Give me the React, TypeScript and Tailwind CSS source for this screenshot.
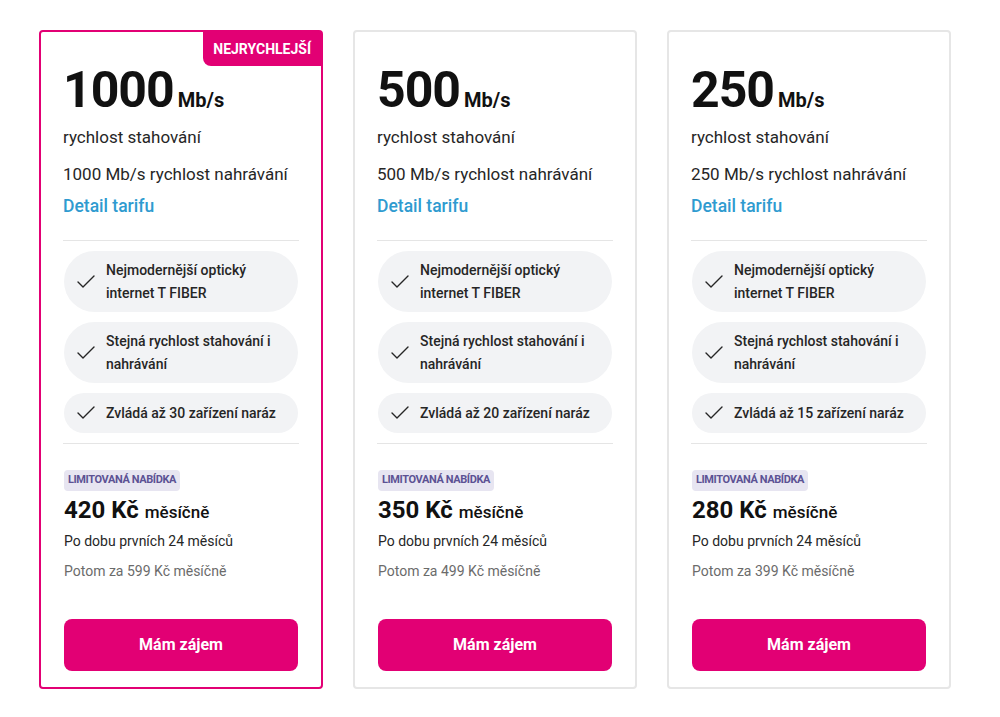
import { Check } from 'lucide-react';

type Plan = {
    speed: string;
    price: string;
    later: string;
    devices: string;
    fastest?: boolean;
};

const plans: Plan[] = [
    { speed: '1000', price: '420', later: '599', devices: '30', fastest: true },
    { speed: '500', price: '350', later: '499', devices: '20' },
    { speed: '250', price: '280', later: '399', devices: '15' },
];

function Feature({ children }: { children: React.ReactNode }) {
    return (
        <div className="mx-px flex items-center gap-2 rounded-full bg-[#f2f3f5] py-2 pl-[10px] pr-4">
            <Check size={24} strokeWidth={1.4} className="shrink-0 text-[#262626]" />
            <span className="text-[14px] font-medium leading-[22.5px] text-[#262626]">{children}</span>
        </div>
    );
}

function PlanCard({ plan }: { plan: Plan }) {
    return (
        <div
            className={
                plan.fastest
                    ? 'relative flex flex-col rounded-[4px] border-2 border-[#e20074] bg-white px-[22px] pt-[33px] pb-4'
                    : 'relative flex flex-col rounded-[4px] border-2 border-[#e6e6e6] bg-white px-[22px] pt-[33px] pb-4'
            }
        >
            {plan.fastest && (
                <div className="absolute top-0 right-0 flex h-[34px] items-center rounded-bl-lg bg-[#e20074] px-[10px] text-[14px] font-bold text-white">
                    NEJRYCHLEJŠÍ
                </div>
            )}

            {/* Speed */}
            <div className="flex items-baseline gap-1 text-[#111]">
                <span className="text-[50px] font-bold leading-[50px] tracking-[-1px]">{plan.speed}</span>
                <span className="text-[20px] font-bold">Mb/s</span>
            </div>
            <p className="mt-[10px] text-[17px] leading-6 text-[#262626]">rychlost stahování</p>
            <p className="mt-[13px] text-[17px] leading-6 text-[#262626]">{plan.speed} Mb/s rychlost nahrávání</p>
            <a href="#" className="mt-2 text-[17.5px] font-medium leading-6 text-[#2f9bd0]">Detail tarifu</a>

            <div className="mt-[22px] h-px bg-[#e5e5e5]" />

            {/* Features */}
            <div className="mt-[10px] flex flex-col gap-[10px]">
                <Feature>Nejmodernější optický internet T FIBER</Feature>
                <Feature>Stejná rychlost stahování i nahrávání</Feature>
                <Feature>Zvládá až {plan.devices} zařízení naráz</Feature>
            </div>

            <div className="mt-[10px] h-px bg-[#e5e5e5]" />

            {/* Price */}
            <div className="mt-[22px] px-px">
                <span className="inline-flex h-[21px] items-center rounded-[4px] bg-[#e7e5f1] px-1 text-[11px] font-bold tracking-[-0.4px] text-[#5c5294]">
                    LIMITOVANÁ NABÍDKA
                </span>
                <div className="mt-[5px] flex items-baseline gap-[6px] text-[#111]">
                    <span className="text-[24px] font-bold leading-7">{plan.price} Kč</span>
                    <span className="text-[17px] font-medium">měsíčně</span>
                </div>
                <p className="mt-[6px] text-[14px] leading-5 text-[#262626]">Po dobu prvních 24 měsíců</p>
                <p className="mt-[10px] text-[14px] leading-5 text-[#6b6b6b]">Potom za {plan.later} Kč měsíčně</p>
            </div>

            <button className="mx-px mt-[38px] h-[52px] rounded-lg bg-[#e20074] text-[16px] font-bold text-white">
                Mám zájem
            </button>
        </div>
    );
}

export default function App() {
    return (
        <div className="min-h-screen bg-white pl-[39px] pt-[30px] font-['Roboto',sans-serif]">
            <div className="grid grid-cols-[284px_284px_284px] gap-[30px]">
                {plans.map((p) => (
                    <PlanCard key={p.speed} plan={p} />
                ))}
            </div>
        </div>
    );
}
